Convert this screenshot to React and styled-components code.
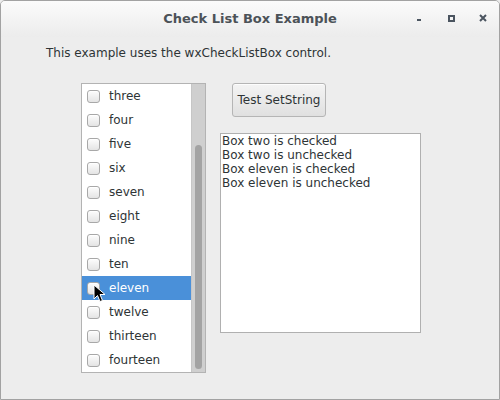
import React from "react";
import styled, { createGlobalStyle } from "styled-components";

const Global = createGlobalStyle`
  html, body { margin: 0; padding: 0; background: #ededed; }
  #root { width: 500px; height: 400px; }
  * { box-sizing: border-box; }
`;

const Window = styled.div`
  width: 500px;
  height: 400px;
  display: flex;
  flex-direction: column;
  border: 1px solid #a2a2a2;
  border-radius: 5px 5px 0 0;
  background: #ededed;
  font-family: "DejaVu Sans", sans-serif;
  overflow: hidden;
`;

const TitleBar = styled.div`
  height: 36px;
  flex: none;
  display: flex;
  align-items: center;
  position: relative;
  background: linear-gradient(#fbfbfb, #ececec);
`;

const Title = styled.div`
  flex: 1;
  text-align: center;
  font-weight: bold;
  font-size: 13px;
  color: #4c5258;
  padding-bottom: 2px;
`;

const Controls = styled.div`
  position: absolute;
  right: 8px;
  top: 11px;
  display: flex;
  gap: 16px;
`;

const Ctl = styled.div`
  width: 16px;
  height: 12px;
  display: flex;
  align-items: center;
  justify-content: center;
`;

const Body = styled.div`
  flex: 1;
  padding: 8px 0 0 45px;
  display: flex;
  flex-direction: column;
  position: relative;
`;

const Intro = styled.div`
  font-size: 12px;
  color: #2e3436;
  height: 16px;
  line-height: 16px;
`;

const Content = styled.div`
  display: flex;
  margin-top: 22px;
  margin-left: 35px;
`;

const ListBox = styled.div`
  width: 125px;
  height: 290px;
  border: 1px solid #b3b3b3;
  background: #fff;
  display: flex;
  position: relative;
`;

const Items = styled.div`
  flex: 1;
  display: flex;
  flex-direction: column;
`;

const Row = styled.div`
  height: 24px;
  flex: none;
  display: flex;
  align-items: center;
  padding-left: 5px;
  gap: 9px;
  font-size: 12px;
  color: ${(p) => (p.$sel ? "#ffffff" : "#2e3436")};
  background: ${(p) => (p.$sel ? "#4a90d9" : "transparent")};
`;

const Box = styled.span`
  width: 13px;
  height: 13px;
  border: 1px solid #a8a8a8;
  border-radius: 3px;
  background: linear-gradient(#fdfdfd, #e4e4e4);
  box-shadow: inset 0 1px 0 #fff;
  flex: none;
`;

const Track = styled.div`
  width: 14px;
  background: #cfcfcf;
  border-left: 1px solid #c6c6c6;
  display: flex;
  flex-direction: column;
  padding: 61px 3px 3px 3px;
`;

const Thumb = styled.div`
  flex: 1;
  background: #a3a3a3;
  border-radius: 4px;
`;

const Right = styled.div`
  display: flex;
  flex-direction: column;
  margin-left: 14px;
`;

const Button = styled.button`
  margin-left: 12px;
  width: 94px;
  height: 34px;
  border: 1px solid #b5b5b5;
  border-radius: 3px;
  background: linear-gradient(#f4f4f4, #e0e0e0);
  box-shadow: 0 1px 0 rgba(255,255,255,0.8) inset;
  font-family: "DejaVu Sans", sans-serif;
  font-size: 12px;
  color: #2e3436;
  padding: 0;
`;

const Log = styled.div`
  margin-top: 16px;
  width: 201px;
  height: 200px;
  border: 1px solid #b0b0b0;
  background: #fff;
  padding: 0 0 0 1px;
  font-size: 12px;
  line-height: 14px;
  color: #2e3436;
`;

const Cursor = styled.svg`
  position: absolute;
  left: 92px;
  top: 247px;
`;

const items = ["three", "four", "five", "six", "seven", "eight", "nine", "ten", "eleven", "twelve", "thirteen", "fourteen"];
const log = ["Box two is checked", "Box two is unchecked", "Box eleven is checked", "Box eleven is unchecked"];

export default function App() {
  return (
    <>
      <Global />
      <Window>
        <TitleBar>
          <Title>Check List Box Example</Title>
          <Controls>
            <Ctl>
              <svg width="6" height="6" viewBox="0 0 6 6"><rect x="1" y="4" width="4" height="2" fill="#4b5560" /></svg>
            </Ctl>
            <Ctl>
              <svg width="7" height="7" viewBox="0 0 7 7"><rect x="1" y="1" width="5" height="5" fill="none" stroke="#4b5560" strokeWidth="2" /></svg>
            </Ctl>
            <Ctl>
              <svg width="8" height="8" viewBox="0 0 8 8"><path d="M1 1L7 7M7 1L1 7" stroke="#4b5560" strokeWidth="2" /></svg>
            </Ctl>
          </Controls>
        </TitleBar>
        <Body>
          <Intro>This example uses the wxCheckListBox control.</Intro>
          <Content>
            <ListBox>
              <Items>
                {items.map((t) => (
                  <Row key={t} $sel={t === "eleven"}>
                    <Box />
                    <span>{t}</span>
                  </Row>
                ))}
              </Items>
              <Track>
                <Thumb />
              </Track>
            </ListBox>
            <Right>
              <Button>Test SetString</Button>
              <Log>
                {log.map((l, i) => (
                  <div key={i}>{l}</div>
                ))}
              </Log>
            </Right>
          </Content>
          <Cursor width="14" height="20" viewBox="0 0 14 20">
            <path d="M1 1 L1 15 L4.5 11.5 L7 17.5 L9.5 16.5 L7 10.5 L12 10.5 Z" fill="#000" stroke="#fff" strokeWidth="1" />
          </Cursor>
        </Body>
      </Window>
    </>
  );
}
